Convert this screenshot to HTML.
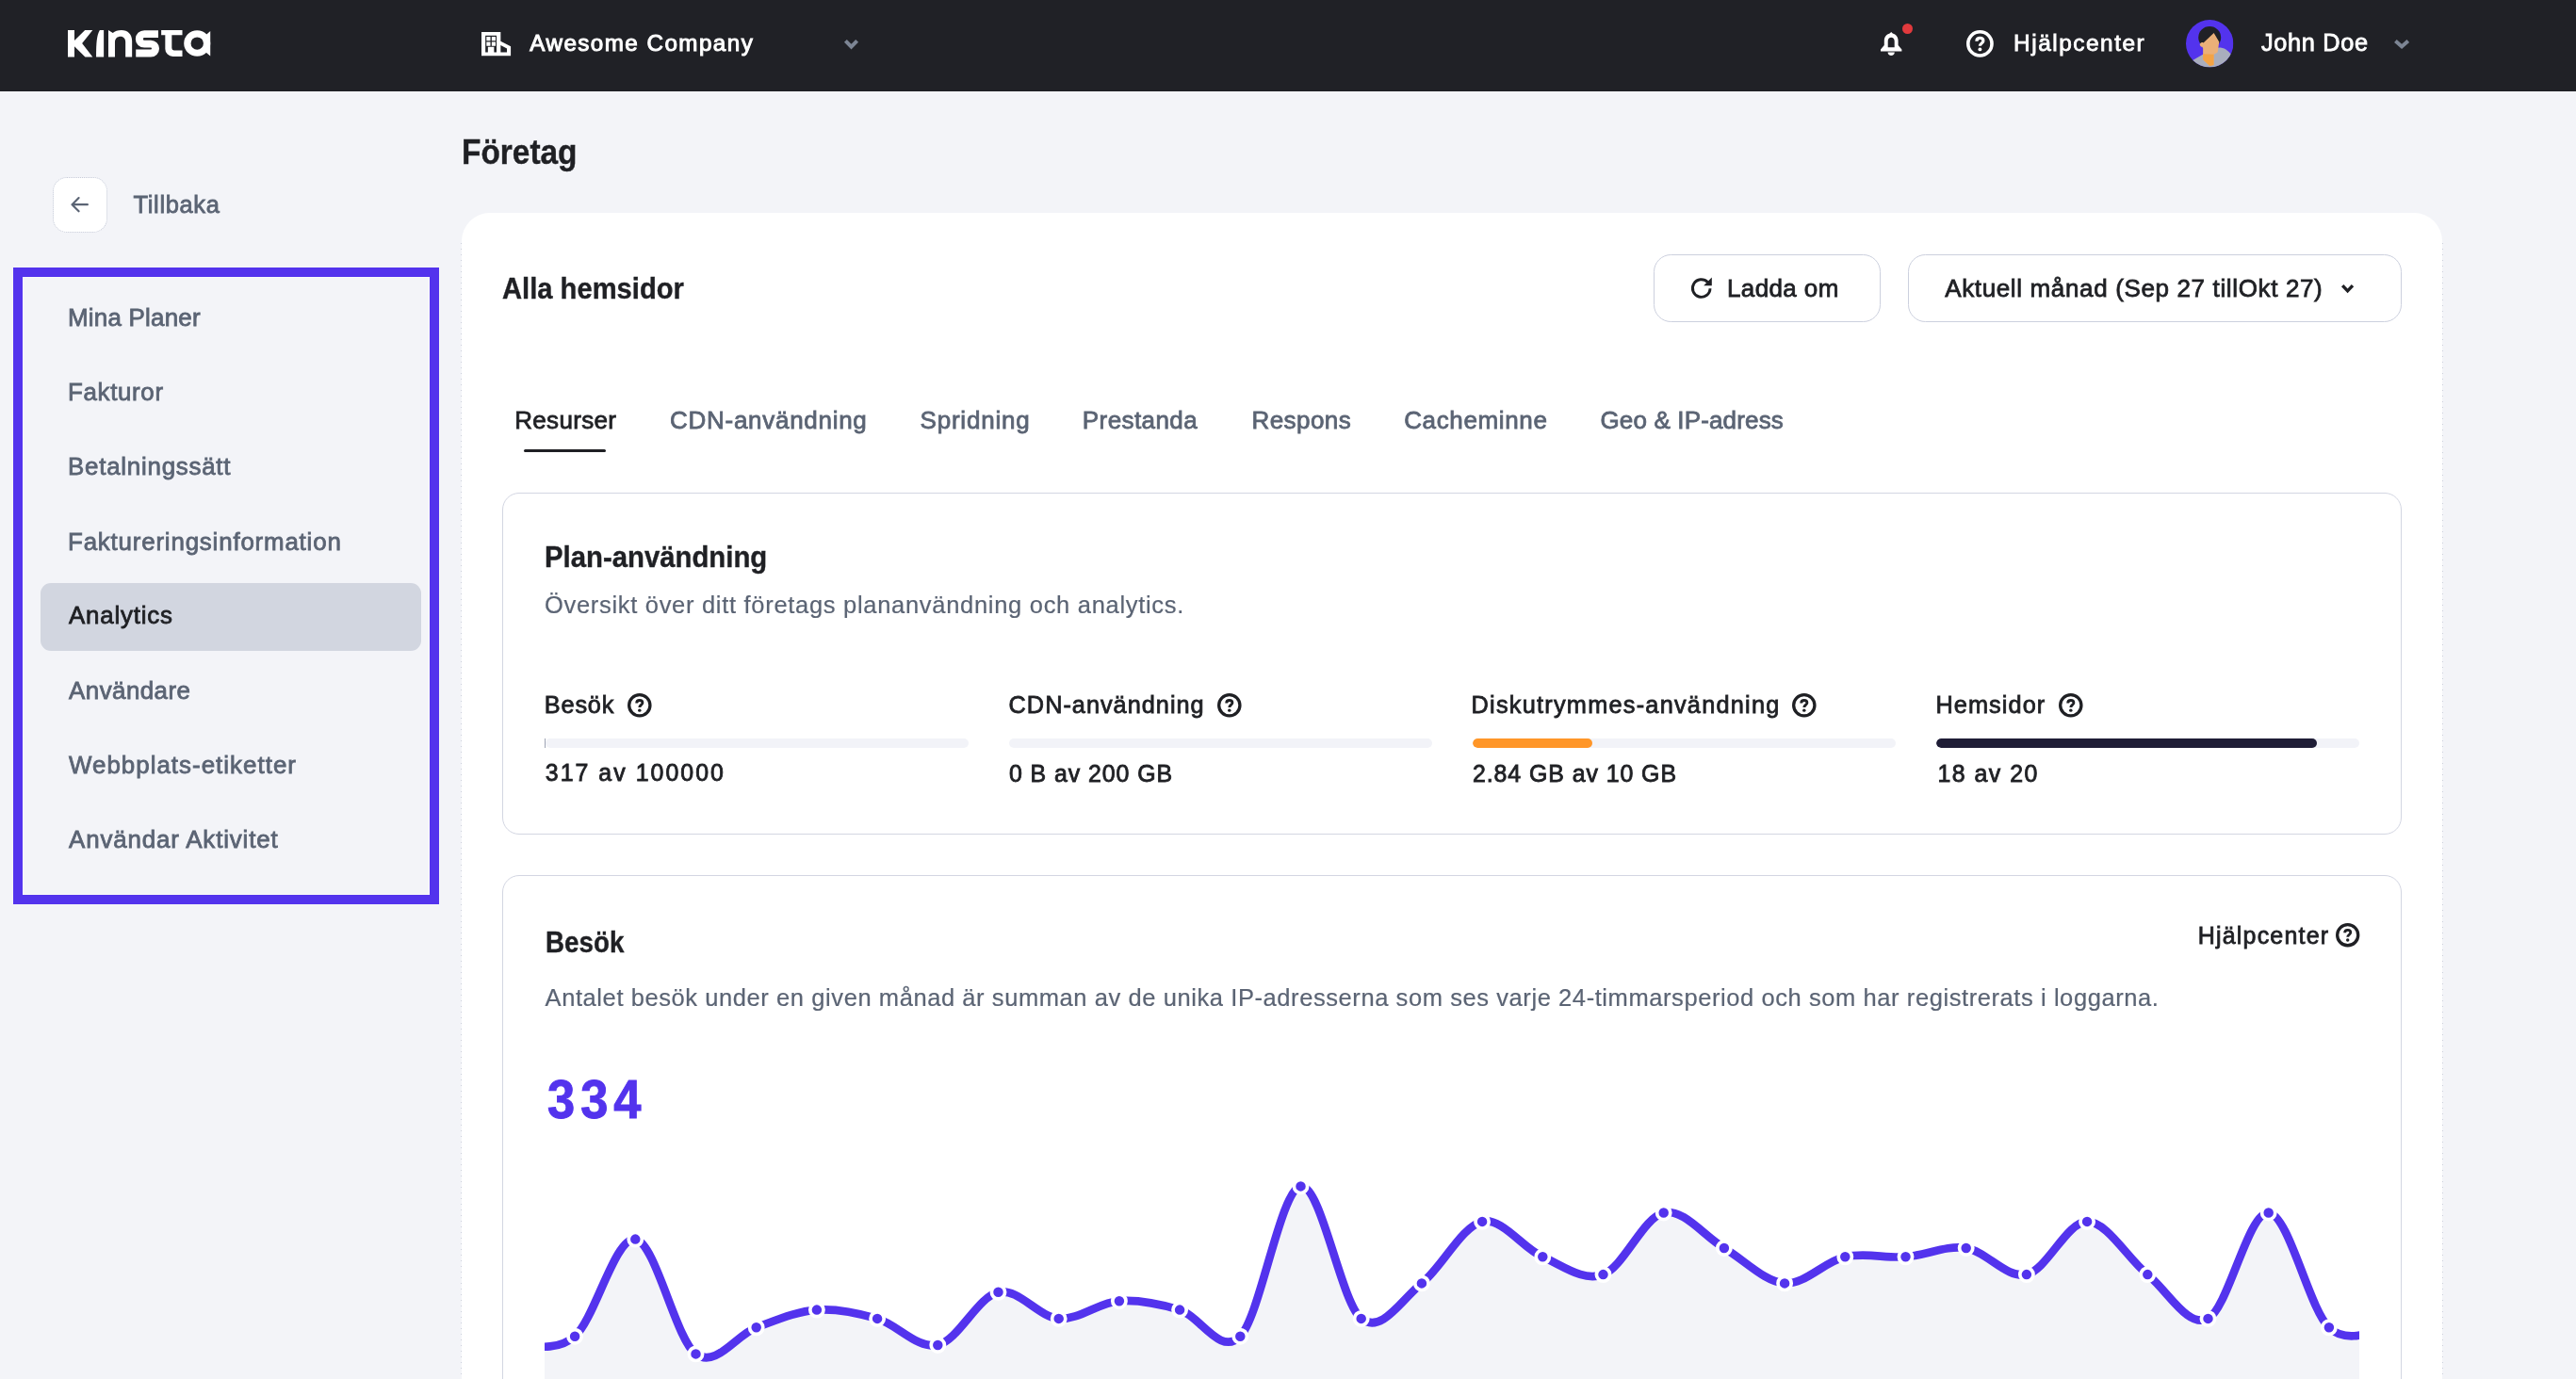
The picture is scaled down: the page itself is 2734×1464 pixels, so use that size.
<!DOCTYPE html>
<html lang="sv"><head><meta charset="utf-8"><title>MyKinsta - Företag - Analytics</title>
<style>
*{box-sizing:border-box;margin:0;padding:0}
html,body{width:2734px;height:1464px;overflow:hidden;background:#f3f4f8}
body{font-family:"Liberation Sans",sans-serif;-webkit-font-smoothing:antialiased}
#root{will-change:transform;position:relative;width:2734px;height:1464px;overflow:hidden;background:#f3f4f8}
.a{position:absolute}
.t{position:absolute;white-space:nowrap;transform-origin:0 50%}
svg{position:absolute;overflow:visible}
#hdr{left:0;top:0;width:2734px;height:97px;background:#202126}
#card{left:489.7px;top:226.3px;width:2102.6px;height:1400px;background:#fff;border-radius:30px}
.inner{border:1px solid #d3d6e2;border-radius:18px;background:#fff}
#hl{left:43px;top:619px;width:404px;height:72px;border-radius:11px;background:#d2d6e0}
#focus{left:14px;top:284px;width:452px;height:676px;border:10px solid #5333ed;box-shadow:inset 0 0 0 .6px rgba(255,255,255,.85)}
#backbtn{left:55.9px;top:187.9px;width:58.2px;height:58.8px;border-radius:15px;background:#fff;border:1.2px dotted #c9cdd9;background-clip:padding-box}
.btn{border:1px solid #ccd0de;border-radius:18.5px;background:#fff}
.bar{height:10px;border-radius:5px;background:#f2f3f8;overflow:hidden}
.bar i{display:block;height:10px;border-radius:5px}
#uline{left:556px;top:476.8px;width:86.7px;height:3px;border-radius:1.5px;background:#1f2024}
.dots{top:258px;width:1px;height:1210px;background:repeating-linear-gradient(to bottom,#cdd1dc 0 1.2px,transparent 1.2px 6px)}

</style></head>
<body>
<div id="root">
<div class="a" id="hdr"></div>
<svg id="logo" style="left:71.8px;top:31.8px" width="151.7" height="28.4" viewBox="0 0 1302 247" preserveAspectRatio="none" fill="#fff">
<path d="M0,0H60V96L156,0H226L130,122L226,247H158L60,150V247H0Z"/>
<path d="M327,0V247H258C258,120 262,50 291,0Z"/>
<path d="M369,0L410,26C428,10 455,0 488,0C548,0 585,40 585,100V247H525V112C525,78 508,58 480,58C452,58 429,76 429,112V247H369Z"/>
<path d="M824,36H697A45.75,45.75 0 0 0 697,127.5H755.5A43,43 0 0 1 755.5,213.5H620" fill="none" stroke="#fff" stroke-width="69"/>
<path d="M851,0H1043V45H947V166A20,20 0 0 0 967,186H1043V243H957A70,70 0 0 1 887,173V45H851Z"/>
<circle cx="1178" cy="122" r="89" fill="none" stroke="#fff" stroke-width="63"/>
<path d="M1238,62L1298,9V240L1262,209L1238,200Z"/>
</svg>
<svg id="bld" style="left:510.8px;top:33.8px" width="31.4" height="25.2" viewBox="0 0 31.4 25.2">
<path fill="#fff" fill-rule="evenodd" d="M0,0H20.35V9.67L31.1,15.2V25.2H0ZM4.17,3.84V21.5H16V3.84ZM5.34,5H9.5V9.34H5.34ZM10.84,5H15V9.34H10.84ZM5.34,10.5H9.5V14.84H5.34ZM10.84,10.5H15V14.84H10.84ZM6.84,15.84H13.34V21.5H6.84ZM20.35,14V21.5H27V17.5Z"/>
</svg>
<svg style="left:896.0px;top:42.3px" width="15.0" height="10.5" viewBox="0 0 15.0 10.5"><path d="M1.40,1.40L7.50,7.70L13.60,1.40" fill="none" stroke="#7c8594" stroke-width="4.0"/></svg>
<svg style="left:2540.8px;top:42.4px" width="16.2" height="10.2" viewBox="0 0 16.2 10.2"><path d="M1.40,1.40L8.10,7.40L14.80,1.40" fill="none" stroke="#7c8594" stroke-width="4.0"/></svg>
<svg id="bell" style="left:1996px;top:34px" width="22.4" height="25" viewBox="0 0 224 250">
<path fill="#fff" fill-rule="evenodd" d="M112,0L128,14C162,22 186,52 186,92V140L224,186V204H0V186L38,140V92C38,52 62,22 96,14ZM77,98V162H147V98C147,74 131,58 112,58C93,58 77,74 77,98Z"/>
<path fill="#fff" d="M76,214H148C148,236 132,250 112,250C92,250 76,236 76,214Z"/>
</svg>
<div class="a" style="left:2019px;top:24.8px;width:11.4px;height:11.4px;border-radius:50%;background:#e13a3d"></div>
<svg style="left:2087.2px;top:32.2px" width="28.8" height="28.8" viewBox="0 0 28.8 28.8"><circle cx="14.4" cy="14.4" r="12.60" fill="none" stroke="#fff" stroke-width="3.60"/><path d="M10.9,11.7C10.9,9.6 12.4,8.4 14.4,8.4C16.4,8.4 17.9,9.6 17.9,11.4C17.9,13.6 14.4,14.2 14.4,16.8" fill="none" stroke="#fff" stroke-width="3.2"/><circle cx="14.4" cy="20.4" r="1.95" fill="#fff"/></svg>
<svg id="av" style="left:2319.8px;top:21.2px" width="50.4" height="50.4" viewBox="0 0 50 50">
<defs><clipPath id="avc"><circle cx="25" cy="25" r="25"/></clipPath></defs>
<g clip-path="url(#avc)"><rect width="50" height="50" fill="#5333ed"/>
<path d="M5,44L17,37C25,33 31,28.6 36.5,29.3C42,30 46,34 49,38.5L50,50H0Z" fill="#a9aebd"/>
<ellipse cx="25" cy="18.6" rx="11.9" ry="11.6" fill="#202126"/>
<path d="M29.4,14L35,23.4L33.4,34.2L29.3,36.8V47.6L25,48.6L18,42V30L17.2,28.6C15.4,28.4 14,26.6 15,25C15.8,23.8 17.4,23.6 18.4,24.2Z" fill="#eab078"/>
<path d="M18,36L29.3,36.4V47.6L25,48.6L18,42Z" fill="#f3a345"/>
</g></svg>
<div class="a" id="backbtn"></div>
<svg style="left:75.3px;top:208.7px" width="19" height="16.4" viewBox="0 0 19 16.4"><path d="M17.9,8.2H1.5M8.6,1.1L1.5,8.2L8.6,15.3" fill="none" stroke="#5b6474" stroke-width="2.15" stroke-linecap="round" stroke-linejoin="round"/></svg>
<div class="a" id="hl"></div>
<div class="a" id="focus"></div>
<div class="a" id="card"></div>
<div class="a dots" style="left:489.2px"></div><div class="a dots" style="left:2592.2px"></div>
<div class="a btn" style="left:1754.7px;top:269.7px;width:241.5px;height:72.1px"></div>
<div class="a btn" style="left:2024.8px;top:269.7px;width:523.9px;height:72.1px"></div>
<svg style="left:1793.6px;top:294px" width="24" height="23.4" viewBox="0 0 24 23.4"><path d="M21,12.2A9.3,9.3 0 1 1 18.4,5.6" fill="none" stroke="#1f2024" stroke-width="2.9"/><path d="M22.8,0.6V9.2H14.2Z" fill="#1f2024"/></svg>
<svg style="left:2485.3px;top:301.8px" width="13.2" height="9.2" viewBox="0 0 13.2 9.2"><path d="M1.19,1.19L6.60,6.82L12.01,1.19" fill="none" stroke="#1f2024" stroke-width="3.4"/></svg>
<div class="a" id="uline"></div>
<div class="a inner" style="left:533px;top:523px;width:2016px;height:363px"></div>
<div class="a bar" style="left:578.5px;top:784px;width:449.5px"></div>
<div class="a bar" style="left:1070.5px;top:784px;width:449.5px"></div>
<div class="a bar" style="left:1562.5px;top:784px;width:449.5px"><i style="width:127.5px;background:#ff9628"></i></div>
<div class="a bar" style="left:2054.5px;top:784px;width:449.5px"><i style="width:404.5px;background:#1f1d36"></i></div>
<svg style="left:666.2px;top:735.6px" width="25.6" height="25.6" viewBox="0 0 28.8 28.8"><circle cx="14.4" cy="14.4" r="12.54" fill="none" stroke="#1f2024" stroke-width="3.71"/><path d="M10.9,11.7C10.9,9.6 12.4,8.4 14.4,8.4C16.4,8.4 17.9,9.6 17.9,11.4C17.9,13.6 14.4,14.2 14.4,16.8" fill="none" stroke="#1f2024" stroke-width="3.2"/><circle cx="14.4" cy="20.4" r="1.95" fill="#1f2024"/></svg>
<svg style="left:1291.6px;top:735.6px" width="25.6" height="25.6" viewBox="0 0 28.8 28.8"><circle cx="14.4" cy="14.4" r="12.54" fill="none" stroke="#1f2024" stroke-width="3.71"/><path d="M10.9,11.7C10.9,9.6 12.4,8.4 14.4,8.4C16.4,8.4 17.9,9.6 17.9,11.4C17.9,13.6 14.4,14.2 14.4,16.8" fill="none" stroke="#1f2024" stroke-width="3.2"/><circle cx="14.4" cy="20.4" r="1.95" fill="#1f2024"/></svg>
<svg style="left:1901.6px;top:735.6px" width="25.6" height="25.6" viewBox="0 0 28.8 28.8"><circle cx="14.4" cy="14.4" r="12.54" fill="none" stroke="#1f2024" stroke-width="3.71"/><path d="M10.9,11.7C10.9,9.6 12.4,8.4 14.4,8.4C16.4,8.4 17.9,9.6 17.9,11.4C17.9,13.6 14.4,14.2 14.4,16.8" fill="none" stroke="#1f2024" stroke-width="3.2"/><circle cx="14.4" cy="20.4" r="1.95" fill="#1f2024"/></svg>
<svg style="left:2185.2px;top:735.6px" width="25.6" height="25.6" viewBox="0 0 28.8 28.8"><circle cx="14.4" cy="14.4" r="12.54" fill="none" stroke="#1f2024" stroke-width="3.71"/><path d="M10.9,11.7C10.9,9.6 12.4,8.4 14.4,8.4C16.4,8.4 17.9,9.6 17.9,11.4C17.9,13.6 14.4,14.2 14.4,16.8" fill="none" stroke="#1f2024" stroke-width="3.2"/><circle cx="14.4" cy="20.4" r="1.95" fill="#1f2024"/></svg>
<div class="a" style="left:577.8px;top:784px;width:1.3px;height:10px;background:#9ea4b4"></div>
<div class="a inner" style="left:533px;top:928.5px;width:2016px;height:700px"></div>
<svg style="left:2478.8px;top:980.2px" width="25.4" height="25.4" viewBox="0 0 28.8 28.8"><circle cx="14.4" cy="14.4" r="12.53" fill="none" stroke="#1f2024" stroke-width="3.74"/><path d="M10.9,11.7C10.9,9.6 12.4,8.4 14.4,8.4C16.4,8.4 17.9,9.6 17.9,11.4C17.9,13.6 14.4,14.2 14.4,16.8" fill="none" stroke="#1f2024" stroke-width="3.2"/><circle cx="14.4" cy="20.4" r="1.95" fill="#1f2024"/></svg>
<svg id="chart" style="left:0;top:0" width="2734" height="1464" viewBox="0 0 2734 1464">
<defs><clipPath id="cc"><rect x="578.0" y="1100" width="1926.0" height="400"/></clipPath></defs>
<g clip-path="url(#cc)"><path d="M545.9,1428.0C556.6,1426.5 588.7,1437.4 610.1,1418.7C631.5,1399.9 652.9,1312.5 674.3,1315.6C695.7,1318.7 717.1,1421.8 738.5,1437.4C759.9,1453.0 781.3,1417.1 802.7,1409.3C824.1,1401.5 845.5,1392.1 866.9,1390.6C888.3,1389.0 909.7,1393.7 931.1,1399.9C952.5,1406.2 973.9,1432.7 995.3,1428.0C1016.7,1423.3 1038.1,1376.5 1059.5,1371.8C1080.9,1367.1 1102.3,1398.4 1123.7,1399.9C1145.1,1401.5 1166.5,1382.7 1187.9,1381.2C1209.3,1379.6 1230.7,1384.3 1252.1,1390.6C1273.5,1396.8 1294.9,1440.5 1316.3,1418.7C1337.7,1396.8 1359.1,1262.5 1380.5,1259.4C1401.9,1256.2 1423.3,1382.7 1444.7,1399.9C1466.1,1417.1 1487.5,1379.6 1508.9,1362.4C1530.3,1345.3 1551.7,1301.5 1573.1,1296.9C1594.5,1292.2 1615.9,1325.0 1637.3,1334.3C1658.7,1343.7 1680.1,1360.9 1701.5,1353.1C1722.9,1345.3 1744.3,1292.2 1765.7,1287.5C1787.1,1282.8 1808.5,1312.5 1829.9,1325.0C1851.3,1337.5 1872.7,1360.9 1894.1,1362.4C1915.5,1364.0 1936.9,1339.0 1958.3,1334.3C1979.7,1329.6 2001.1,1335.9 2022.5,1334.3C2043.9,1332.8 2065.3,1321.8 2086.7,1325.0C2108.1,1328.1 2129.5,1357.8 2150.9,1353.1C2172.3,1348.4 2193.7,1296.9 2215.1,1296.9C2236.5,1296.9 2257.9,1335.9 2279.3,1353.1C2300.7,1370.2 2322.1,1410.9 2343.5,1399.9C2364.9,1389.0 2386.3,1285.9 2407.7,1287.5C2429.1,1289.0 2450.5,1389.0 2471.9,1409.3C2493.3,1429.6 2525.4,1409.3 2536.1,1409.3L2536.1,1500L545.9,1500Z" fill="#f3f4f8"/><path d="M545.9,1428.0C556.6,1426.5 588.7,1437.4 610.1,1418.7C631.5,1399.9 652.9,1312.5 674.3,1315.6C695.7,1318.7 717.1,1421.8 738.5,1437.4C759.9,1453.0 781.3,1417.1 802.7,1409.3C824.1,1401.5 845.5,1392.1 866.9,1390.6C888.3,1389.0 909.7,1393.7 931.1,1399.9C952.5,1406.2 973.9,1432.7 995.3,1428.0C1016.7,1423.3 1038.1,1376.5 1059.5,1371.8C1080.9,1367.1 1102.3,1398.4 1123.7,1399.9C1145.1,1401.5 1166.5,1382.7 1187.9,1381.2C1209.3,1379.6 1230.7,1384.3 1252.1,1390.6C1273.5,1396.8 1294.9,1440.5 1316.3,1418.7C1337.7,1396.8 1359.1,1262.5 1380.5,1259.4C1401.9,1256.2 1423.3,1382.7 1444.7,1399.9C1466.1,1417.1 1487.5,1379.6 1508.9,1362.4C1530.3,1345.3 1551.7,1301.5 1573.1,1296.9C1594.5,1292.2 1615.9,1325.0 1637.3,1334.3C1658.7,1343.7 1680.1,1360.9 1701.5,1353.1C1722.9,1345.3 1744.3,1292.2 1765.7,1287.5C1787.1,1282.8 1808.5,1312.5 1829.9,1325.0C1851.3,1337.5 1872.7,1360.9 1894.1,1362.4C1915.5,1364.0 1936.9,1339.0 1958.3,1334.3C1979.7,1329.6 2001.1,1335.9 2022.5,1334.3C2043.9,1332.8 2065.3,1321.8 2086.7,1325.0C2108.1,1328.1 2129.5,1357.8 2150.9,1353.1C2172.3,1348.4 2193.7,1296.9 2215.1,1296.9C2236.5,1296.9 2257.9,1335.9 2279.3,1353.1C2300.7,1370.2 2322.1,1410.9 2343.5,1399.9C2364.9,1389.0 2386.3,1285.9 2407.7,1287.5C2429.1,1289.0 2450.5,1389.0 2471.9,1409.3C2493.3,1429.6 2525.4,1409.3 2536.1,1409.3" fill="none" stroke="#5333ed" stroke-width="8.7" stroke-linejoin="round"/></g>
<g fill="#5333ed" stroke="#fff" stroke-width="3.7"><circle cx="610.1" cy="1418.7" r="7.1"/><circle cx="674.3" cy="1315.6" r="7.1"/><circle cx="738.5" cy="1437.4" r="7.1"/><circle cx="802.7" cy="1409.3" r="7.1"/><circle cx="866.9" cy="1390.6" r="7.1"/><circle cx="931.1" cy="1399.9" r="7.1"/><circle cx="995.3" cy="1428.0" r="7.1"/><circle cx="1059.5" cy="1371.8" r="7.1"/><circle cx="1123.7" cy="1399.9" r="7.1"/><circle cx="1187.9" cy="1381.2" r="7.1"/><circle cx="1252.1" cy="1390.6" r="7.1"/><circle cx="1316.3" cy="1418.7" r="7.1"/><circle cx="1380.5" cy="1259.4" r="7.1"/><circle cx="1444.7" cy="1399.9" r="7.1"/><circle cx="1508.9" cy="1362.4" r="7.1"/><circle cx="1573.1" cy="1296.9" r="7.1"/><circle cx="1637.3" cy="1334.3" r="7.1"/><circle cx="1701.5" cy="1353.1" r="7.1"/><circle cx="1765.7" cy="1287.5" r="7.1"/><circle cx="1829.9" cy="1325.0" r="7.1"/><circle cx="1894.1" cy="1362.4" r="7.1"/><circle cx="1958.3" cy="1334.3" r="7.1"/><circle cx="2022.5" cy="1334.3" r="7.1"/><circle cx="2086.7" cy="1325.0" r="7.1"/><circle cx="2150.9" cy="1353.1" r="7.1"/><circle cx="2215.1" cy="1296.9" r="7.1"/><circle cx="2279.3" cy="1353.1" r="7.1"/><circle cx="2343.5" cy="1399.9" r="7.1"/><circle cx="2407.7" cy="1287.5" r="7.1"/><circle cx="2471.9" cy="1409.3" r="7.1"/></g>
</svg>
<div class="t" id="co" style="left:562.3px;top:33.6px;font-size:24.2px;line-height:24.2px;color:#fff;-webkit-text-stroke:1.00px #fff;letter-spacing:1.46px;">Awesome Company</div>
<div class="t" id="hc" style="left:2137.1px;top:34.4px;font-size:24.4px;line-height:24.4px;color:#fff;-webkit-text-stroke:0.80px #fff;letter-spacing:1.52px;">Hjälpcenter</div>
<div class="t" id="jd" style="left:2400.0px;top:33.1px;font-size:25.3px;line-height:25.3px;color:#fff;-webkit-text-stroke:0.80px #fff;letter-spacing:0.67px;">John Doe</div>
<div class="t" id="back" style="left:141.5px;top:204.8px;font-size:25.5px;line-height:25.5px;color:#5b6474;-webkit-text-stroke:0.80px #5b6474;letter-spacing:0.64px;">Tillbaka</div>
<div class="t" id="ttl" style="left:489.8px;top:143.6px;font-size:36.0px;line-height:36.0px;color:#1f2024;font-weight:bold;-webkit-text-stroke:0.40px #1f2024;transform:scaleX(0.9282);">Företag</div>
<div class="t" id="sb0" style="left:72.0px;top:325.2px;font-size:25.9px;line-height:25.9px;color:#5b6474;-webkit-text-stroke:0.80px #5b6474;letter-spacing:0.24px;">Mina Planer</div>
<div class="t" id="sb1" style="left:72.0px;top:403.6px;font-size:25.9px;line-height:25.9px;color:#5b6474;-webkit-text-stroke:0.80px #5b6474;letter-spacing:0.66px;">Fakturor</div>
<div class="t" id="sb2" style="left:72.0px;top:482.8px;font-size:25.9px;line-height:25.9px;color:#5b6474;-webkit-text-stroke:0.80px #5b6474;letter-spacing:0.76px;">Betalningssätt</div>
<div class="t" id="sb3" style="left:72.0px;top:562.6px;font-size:25.9px;line-height:25.9px;color:#5b6474;-webkit-text-stroke:0.80px #5b6474;letter-spacing:0.81px;">Faktureringsinformation</div>
<div class="t" id="sb4" style="left:73.0px;top:641.4px;font-size:25.9px;line-height:25.9px;color:#1f2024;-webkit-text-stroke:0.80px #1f2024;letter-spacing:0.79px;">Analytics</div>
<div class="t" id="sb5" style="left:73.1px;top:721.2px;font-size:25.9px;line-height:25.9px;color:#5b6474;-webkit-text-stroke:0.80px #5b6474;letter-spacing:0.45px;">Användare</div>
<div class="t" id="sb6" style="left:73.0px;top:799.6px;font-size:25.9px;line-height:25.9px;color:#5b6474;-webkit-text-stroke:0.80px #5b6474;letter-spacing:1.02px;">Webbplats-etiketter</div>
<div class="t" id="sb7" style="left:73.1px;top:878.8px;font-size:25.9px;line-height:25.9px;color:#5b6474;-webkit-text-stroke:0.80px #5b6474;letter-spacing:0.84px;">Användar Aktivitet</div>
<div class="t" id="alla" style="left:532.5px;top:291.2px;font-size:31.0px;line-height:31.0px;color:#1f2024;font-weight:bold;-webkit-text-stroke:0.40px #1f2024;transform:scaleX(0.9408);">Alla hemsidor</div>
<div class="t" id="ladda" style="left:1832.9px;top:292.6px;font-size:26.0px;line-height:26.0px;color:#1f2024;-webkit-text-stroke:0.80px #1f2024;letter-spacing:0.41px;">Ladda om</div>
<div class="t" id="akt" style="left:2064.2px;top:292.6px;font-size:26.0px;line-height:26.0px;color:#1f2024;-webkit-text-stroke:0.80px #1f2024;letter-spacing:0.64px;">Aktuell månad (Sep 27 tillOkt 27)</div>
<div class="t" id="tab0" style="left:546.2px;top:433.2px;font-size:26.0px;line-height:26.0px;color:#1f2024;-webkit-text-stroke:0.80px #1f2024;letter-spacing:0.32px;">Resurser</div>
<div class="t" id="tab1" style="left:711.1px;top:433.2px;font-size:26.0px;line-height:26.0px;color:#5b6474;-webkit-text-stroke:0.80px #5b6474;letter-spacing:0.71px;">CDN-användning</div>
<div class="t" id="tab2" style="left:976.5px;top:433.2px;font-size:26.0px;line-height:26.0px;color:#5b6474;-webkit-text-stroke:0.80px #5b6474;letter-spacing:0.79px;">Spridning</div>
<div class="t" id="tab3" style="left:1148.8px;top:433.2px;font-size:26.0px;line-height:26.0px;color:#5b6474;-webkit-text-stroke:0.80px #5b6474;letter-spacing:0.42px;">Prestanda</div>
<div class="t" id="tab4" style="left:1328.5px;top:433.2px;font-size:26.0px;line-height:26.0px;color:#5b6474;-webkit-text-stroke:0.80px #5b6474;letter-spacing:0.44px;">Respons</div>
<div class="t" id="tab5" style="left:1490.2px;top:433.2px;font-size:26.0px;line-height:26.0px;color:#5b6474;-webkit-text-stroke:0.80px #5b6474;letter-spacing:0.64px;">Cacheminne</div>
<div class="t" id="tab6" style="left:1698.4px;top:433.2px;font-size:26.0px;line-height:26.0px;color:#5b6474;-webkit-text-stroke:0.80px #5b6474;letter-spacing:0.16px;">Geo &amp; IP-adress</div>
<div class="t" id="plan" style="left:577.8px;top:576.0px;font-size:31.0px;line-height:31.0px;color:#1f2024;font-weight:bold;-webkit-text-stroke:0.40px #1f2024;transform:scaleX(0.9458);">Plan-användning</div>
<div class="t" id="ovr" style="left:577.9px;top:630.4px;font-size:25.5px;line-height:25.5px;color:#5b6474;-webkit-text-stroke:0.20px #5b6474;letter-spacing:0.70px;">Översikt över ditt företags plananvändning och analytics.</div>
<div class="t" id="l0" style="left:577.8px;top:736.3px;font-size:25.3px;line-height:25.3px;color:#1f2024;-webkit-text-stroke:0.80px #1f2024;letter-spacing:0.82px;">Besök</div>
<div class="t" id="l1" style="left:1070.6px;top:736.3px;font-size:25.3px;line-height:25.3px;color:#1f2024;-webkit-text-stroke:0.80px #1f2024;letter-spacing:1.00px;">CDN-användning</div>
<div class="t" id="l2" style="left:1561.6px;top:736.3px;font-size:25.3px;line-height:25.3px;color:#1f2024;-webkit-text-stroke:0.80px #1f2024;letter-spacing:1.24px;">Diskutrymmes-användning</div>
<div class="t" id="l3" style="left:2054.5px;top:736.3px;font-size:25.3px;line-height:25.3px;color:#1f2024;-webkit-text-stroke:0.80px #1f2024;letter-spacing:1.07px;">Hemsidor</div>
<div class="t" id="v0" style="left:578.8px;top:808.1px;font-size:24.9px;line-height:24.9px;color:#1f2024;-webkit-text-stroke:0.85px #1f2024;letter-spacing:2.03px;">317 av 100000</div>
<div class="t" id="v1" style="left:1071.0px;top:808.5px;font-size:24.9px;line-height:24.9px;color:#1f2024;-webkit-text-stroke:0.85px #1f2024;letter-spacing:0.93px;">0 B av 200 GB</div>
<div class="t" id="v2" style="left:1562.9px;top:808.7px;font-size:24.9px;line-height:24.9px;color:#1f2024;-webkit-text-stroke:0.85px #1f2024;letter-spacing:0.94px;">2.84 GB av 10 GB</div>
<div class="t" id="v3" style="left:2056.5px;top:808.7px;font-size:24.9px;line-height:24.9px;color:#1f2024;-webkit-text-stroke:0.85px #1f2024;letter-spacing:1.48px;">18 av 20</div>
<div class="t" id="bes" style="left:578.6px;top:984.9px;font-size:31.0px;line-height:31.0px;color:#1f2024;font-weight:bold;-webkit-text-stroke:0.40px #1f2024;transform:scaleX(0.8957);">Besök</div>
<div class="t" id="ant" style="left:578.6px;top:1047.4px;font-size:25.5px;line-height:25.5px;color:#5b6474;-webkit-text-stroke:0.20px #5b6474;letter-spacing:0.58px;">Antalet besök under en given månad är summan av de unika IP-adresserna som ses varje 24-timmarsperiod och som har registrerats i loggarna.</div>
<div class="t" id="n334" style="left:580.7px;top:1138.7px;font-size:57.3px;line-height:57.3px;color:#5333ed;font-weight:bold;-webkit-text-stroke:1.00px #5333ed;letter-spacing:6.57px;transform:scaleX(0.915);">334</div>
<div class="t" id="hc2" style="left:2332.7px;top:980.6px;font-size:25.0px;line-height:25.0px;color:#1f2024;-webkit-text-stroke:0.80px #1f2024;letter-spacing:1.20px;">Hjälpcenter</div>
</div>
</body></html>
